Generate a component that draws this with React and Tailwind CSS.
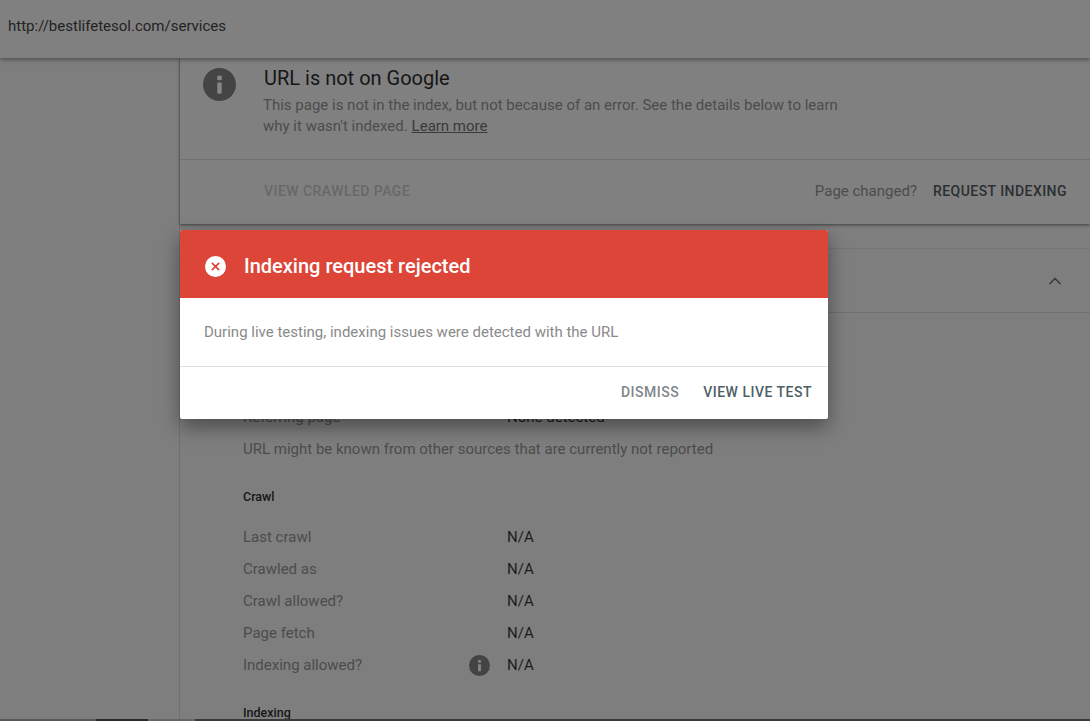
import { ChevronUp } from 'lucide-react'

const crawlRows = [
  { label: 'Last crawl', value: 'N/A' },
  { label: 'Crawled as', value: 'N/A' },
  { label: 'Crawl allowed?', value: 'N/A' },
  { label: 'Page fetch', value: 'N/A' },
  { label: 'Indexing allowed?', value: 'N/A', info: true },
]

function InfoIcon({ className }) {
  return (
    <svg viewBox="0 0 24 24" className={className}>
      <circle cx="12" cy="12" r="12" fill="#444444" />
      <rect x="10.4" y="10.6" width="3.2" height="8" fill="#868686" />
      <rect x="10.4" y="5.6" width="3.2" height="3.2" fill="#868686" />
    </svg>
  )
}

function Row({ label, value, info }) {
  return (
    <div className="flex h-8 items-center text-[15px]">
      <div className="flex w-[264px] items-center justify-between pr-[17px] text-[#4c4c4c]">
        {label}
        {info && <InfoIcon className="h-[21px] w-[21px]" />}
      </div>
      <div className="text-[#1c1c1c]">{value}</div>
    </div>
  )
}

export default function App() {
  return (
    <div className="relative flex h-[721px] w-[1090px] flex-col overflow-hidden bg-[#7e7e7e] font-['Roboto',sans-serif]">
      {/* URL bar */}
      <div className="relative z-10 flex h-[58px] shrink-0 items-center bg-[#808080] pb-[6px] pl-2 text-[15px] text-[#232323] shadow-[0_2px_4px_rgba(0,0,0,0.35)]">
        http://bestlifetesol.com/services
      </div>

      <div className="flex flex-1 overflow-hidden">
        <div className="w-[180px] shrink-0 border-r border-[#707070]" />

        <div className="flex-1">
          {/* Coverage card */}
          <div className="h-[166px] bg-[#808080] shadow-[0_1px_3px_rgba(0,0,0,0.5)]">
            <div className="flex h-[102px] border-b border-[#707070]">
              <div className="w-[83px] shrink-0 pl-[23px] pt-[10px]">
                <InfoIcon className="h-[33px] w-[33px]" />
              </div>
              <div className="pt-[7px]">
                <div className="pl-px text-[20px] leading-[26px] text-[#161616]">URL is not on Google</div>
                <div className="mt-[4px] w-[590px] text-[15px] leading-[21px] text-[#4c4c4c]">
                  <div>This page is not in the index, but not because of an error. See the details below to learn</div>
                  <div className="flex gap-1">
                    <span>why it wasn't indexed.</span>
                    <span className="text-[#3a3a3a] underline">Learn more</span>
                  </div>
                </div>
              </div>
            </div>
            <div className="flex h-[64px] items-center justify-between pb-[2px] pl-[84px] pr-[23px]">
              <span className="text-sm font-medium tracking-[0.45px] text-[#686868]">VIEW CRAWLED PAGE</span>
              <div className="flex items-center gap-4">
                <span className="text-[15px] text-[#4c4c4c]">Page changed?</span>
                <span className="text-sm font-medium tracking-[0.45px] text-[#2b2f31]">REQUEST INDEXING</span>
              </div>
            </div>
          </div>

          {/* Coverage details */}
          <div className="mt-6 border-t border-[#747474]">
            <div className="flex h-16 items-center justify-end border-b border-[#707070] pr-[25px]">
              <ChevronUp size={20} strokeWidth={2} className="text-[#3a3a3a]" />
            </div>
            <div className="pl-[63px] pt-[88px]">
              <Row label="Referring page" value="None detected" />
              <p className="mt-[6px] text-[15px] leading-5 text-[#4c4c4c]">
                URL might be known from other sources that are currently not reported
              </p>
              <h3 className="mt-[30px] text-[12.5px] font-medium leading-4 text-[#161616]">Crawl</h3>
              <div className="mt-[16px]">
                {crawlRows.map((row) => (
                  <Row key={row.label} {...row} />
                ))}
              </div>
              <h3 className="mt-[24px] text-[12.5px] font-medium leading-4 text-[#161616]">Indexing</h3>
            </div>
          </div>
        </div>
      </div>

      {/* Strip of the next window along the bottom edge */}
      <div className="relative z-10 flex h-[2px] shrink-0">
        <div className="w-[96px] bg-[#585858]" />
        <div className="w-[52px] bg-[#2a2a2a]" />
        <div className="w-[47px] bg-[#666666]" />
        <div className="flex-1 bg-[#3a3a3a]" />
      </div>

      {/* Dialog */}
      <div className="absolute left-[180px] top-[230px] z-20 w-[648px] overflow-hidden rounded-[2px] bg-white shadow-[0_8px_20px_rgba(0,0,0,0.4)]">
        <div className="flex h-[68px] items-center gap-[18px] bg-[#dd4538] pl-[25px] pt-[4px]">
          <svg viewBox="0 0 20 20" className="h-[21px] w-[21px]">
            <circle cx="10" cy="10" r="10" fill="#ffffff" />
            <path d="M6.5 6.5l7 7M13.5 6.5l-7 7" stroke="#dd4538" strokeWidth="1.6" />
          </svg>
          <span className="text-[20px] font-medium leading-6 text-white">Indexing request rejected</span>
        </div>
        <div className="flex h-[69px] items-center border-b border-[#e0e0e0] pl-6 text-[15px] text-[#8a8a8a]">
          During live testing, indexing issues were detected with the URL
        </div>
        <div className="flex h-[52px] items-center justify-end gap-6 pb-[2px] pr-4 text-sm font-medium tracking-[0.5px]">
          <span className="text-[#80868b]">DISMISS</span>
          <span className="text-[#4f5f67]">VIEW LIVE TEST</span>
        </div>
      </div>
    </div>
  )
}
